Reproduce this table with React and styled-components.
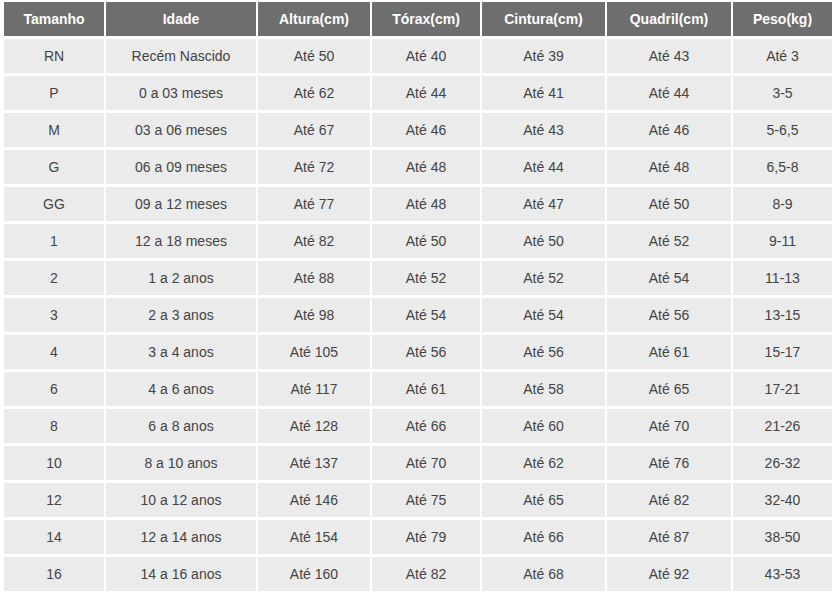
import React from 'react';
import styled, {createGlobalStyle} from 'styled-components';

const GlobalStyle = createGlobalStyle`
  body {
    margin: 0;
    background: #fff;
    font-family: "Liberation Sans", Arial, sans-serif;
  }
`;

const headers = ['Tamanho', 'Idade', 'Altura(cm)', 'Tórax(cm)', 'Cintura(cm)', 'Quadril(cm)', 'Peso(kg)'];

const rows = [
  ['RN', 'Recém Nascido', 'Até 50', 'Até 40', 'Até 39', 'Até 43', 'Até 3'],
  ['P', '0 a 03 meses', 'Até 62', 'Até 44', 'Até 41', 'Até 44', '3-5'],
  ['M', '03 a 06 meses', 'Até 67', 'Até 46', 'Até 43', 'Até 46', '5-6,5'],
  ['G', '06 a 09 meses', 'Até 72', 'Até 48', 'Até 44', 'Até 48', '6,5-8'],
  ['GG', '09 a 12 meses', 'Até 77', 'Até 48', 'Até 47', 'Até 50', '8-9'],
  ['1', '12 a 18 meses', 'Até 82', 'Até 50', 'Até 50', 'Até 52', '9-11'],
  ['2', '1 a 2 anos', 'Até 88', 'Até 52', 'Até 52', 'Até 54', '11-13'],
  ['3', '2 a 3 anos', 'Até 98', 'Até 54', 'Até 54', 'Até 56', '13-15'],
  ['4', '3 a 4 anos', 'Até 105', 'Até 56', 'Até 56', 'Até 61', '15-17'],
  ['6', '4 a 6 anos', 'Até 117', 'Até 61', 'Até 58', 'Até 65', '17-21'],
  ['8', '6 a 8 anos', 'Até 128', 'Até 66', 'Até 60', 'Até 70', '21-26'],
  ['10', '8 a 10 anos', 'Até 137', 'Até 70', 'Até 62', 'Até 76', '26-32'],
  ['12', '10 a 12 anos', 'Até 146', 'Até 75', 'Até 65', 'Até 82', '32-40'],
  ['14', '12 a 14 anos', 'Até 154', 'Até 79', 'Até 66', 'Até 87', '38-50'],
  ['16', '14 a 16 anos', 'Até 160', 'Até 82', 'Até 68', 'Até 92', '43-53'],
];

export default function App() {
  return (
    <>
      <GlobalStyle/>
      <Page>
        <Table>
          {headers.map((h) => (
            <HeadCell key={h}>{h}</HeadCell>
          ))}
          {rows.map((row) =>
            row.map((value, i) => (
              <Cell key={row[0] + i}>{value}</Cell>
            ))
          )}
        </Table>
      </Page>
    </>
  );
}

const Page = styled.div`
  padding: 2px 0 0 4px;
`;

const Table = styled.div`
  display: grid;
  grid-template-columns: 100px 150px 112px 108px 123px 124px 99px;
  grid-auto-rows: 34px;
  column-gap: 2px;
  row-gap: 3px;
  width: 828px;
`;

const HeadCell = styled.div`
  background: #6e6e6e;
  color: #fff;
  font-weight: bold;
  font-size: 14px;
  display: flex;
  align-items: center;
  justify-content: center;
`;

const Cell = styled.div`
  background: #ebebeb;
  color: #444;
  font-size: 14px;
  display: flex;
  align-items: center;
  justify-content: center;
`;
